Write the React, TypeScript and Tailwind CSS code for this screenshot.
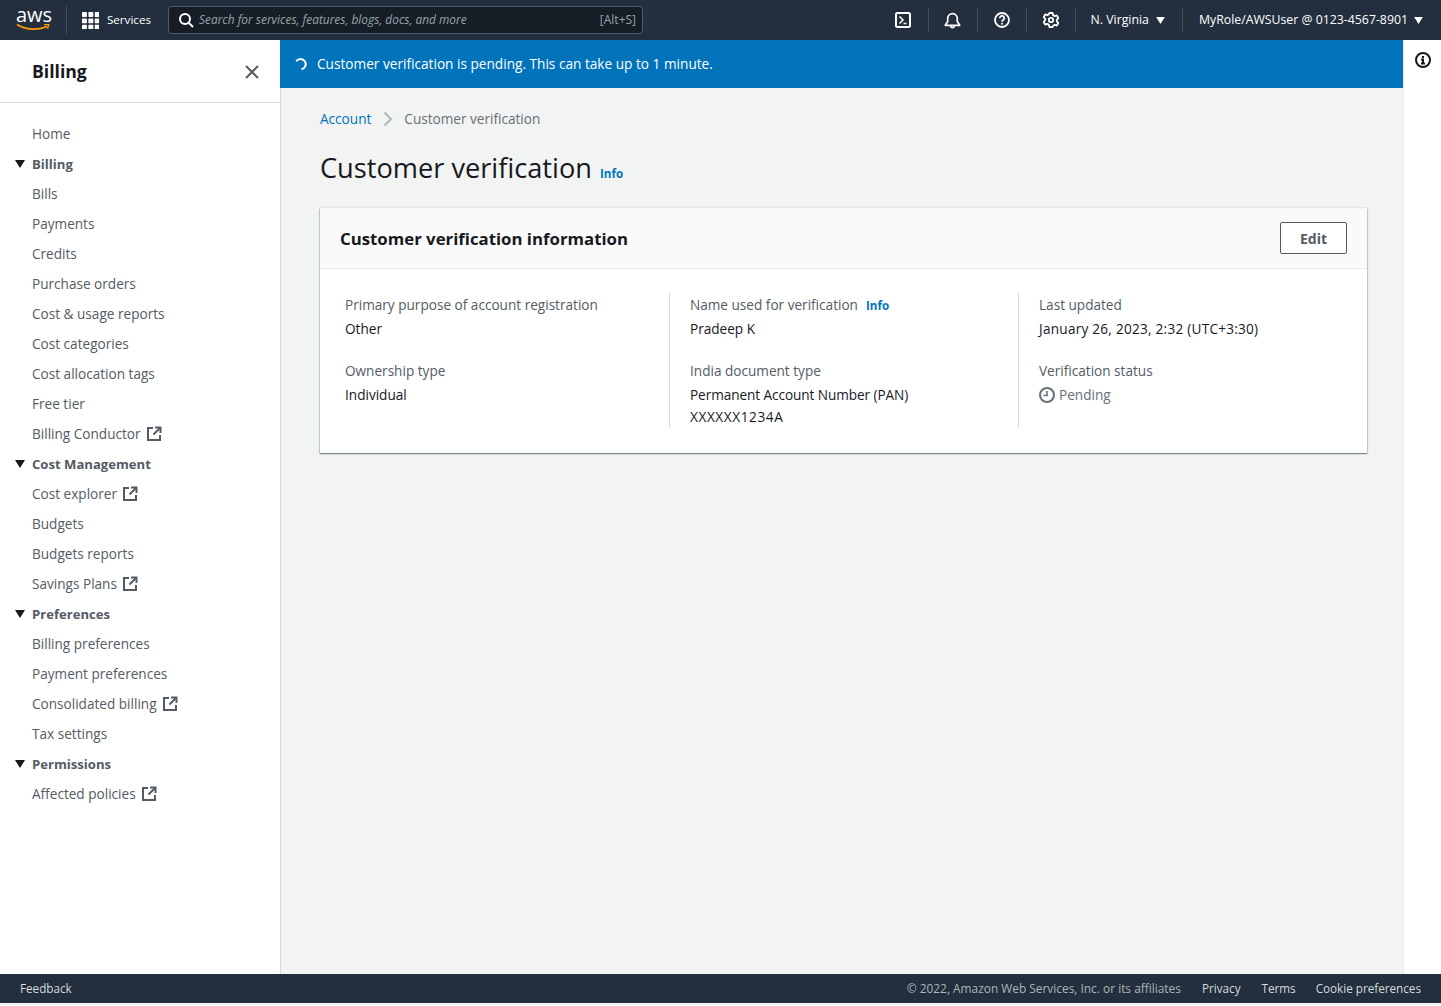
import type { ReactNode } from "react";

type NavItem = { label: string; section?: boolean; external?: boolean };

const NAV: NavItem[] = [
  { label: "Home" },
  { label: "Billing", section: true },
  { label: "Bills" },
  { label: "Payments" },
  { label: "Credits" },
  { label: "Purchase orders" },
  { label: "Cost & usage reports" },
  { label: "Cost categories" },
  { label: "Cost allocation tags" },
  { label: "Free tier" },
  { label: "Billing Conductor", external: true },
  { label: "Cost Management", section: true },
  { label: "Cost explorer", external: true },
  { label: "Budgets" },
  { label: "Budgets reports" },
  { label: "Savings Plans", external: true },
  { label: "Preferences", section: true },
  { label: "Billing preferences" },
  { label: "Payment preferences" },
  { label: "Consolidated billing", external: true },
  { label: "Tax settings" },
  { label: "Permissions", section: true },
  { label: "Affected policies", external: true },
];

function ExternalIcon() {
  return (
    <svg width="16" height="16" viewBox="0 0 16 16" fill="none" stroke="#545b64" strokeWidth="2" className="ml-[5px] shrink-0">
      <path d="M7 2H2v12h12V9" />
      <path d="M9 1.5h5.5V7" />
      <path d="M14 2L7.5 8.5" />
    </svg>
  );
}

function Caret({ className }: { className: string }) {
  return (
    <svg viewBox="0 0 10 8" className={className} fill="currentColor">
      <path d="M0 0h10L5 8z" />
    </svg>
  );
}

function Divider() {
  return <div className="h-6 w-px bg-[#414d5c]" />;
}

function TopBar() {
  return (
    <header className="h-10 shrink-0 bg-[#232f3e] flex items-center text-white text-[12.3px]">
      <div className="w-[66px] pl-4 flex flex-col items-start">
        <span className="text-[20px] leading-[15px] -mt-[3px]">aws</span>
        <svg width="34" height="8" viewBox="0 0 34 8" fill="none" className="mt-[1px]">
          <path d="M1 1.5C9 7 23 7.5 31 3.2" stroke="#ff9900" strokeWidth="1.8" />
          <path d="M28 1.6L32.8 1.6L31.4 5.8" stroke="#ff9900" strokeWidth="1.4" />
        </svg>
      </div>
      <div className="h-7 w-px bg-[#414d5c]" />
      <svg width="17" height="17" viewBox="0 0 16 16" fill="#fff" className="ml-[15px]">
        {[0, 6, 12].map((y) =>
          [0, 6, 12].map((x) => <rect key={`${x}-${y}`} x={x} y={y} width="4.6" height="4.6" rx="0.6" />)
        )}
      </svg>
      <span className="ml-2 w-[44px] text-[11.6px]">Services</span>
      <div className="ml-[17px] w-[475px] h-[28px] bg-[#161d26] border border-[#545b64] rounded-sm flex items-center pl-[9px] pr-[6px]">
        <svg width="16" height="16" viewBox="0 0 16 16" fill="none" stroke="#fff" strokeWidth="2">
          <circle cx="7" cy="7" r="5" />
          <path d="M10.5 10.5L15 15" />
        </svg>
        <span className="ml-[5px] italic text-[11.9px] text-[#95a5a6]">Search for services, features, blogs, docs, and more</span>
        <span className="ml-auto text-[#95a5a6] text-[12px]">[Alt+S]</span>
      </div>
      <div className="ml-auto flex items-center">
        <div className="w-[49px] flex justify-center">
          <svg width="16" height="16" viewBox="0 0 16 16" fill="none" stroke="#fff" strokeWidth="2">
            <rect x="1" y="1" width="14" height="14" rx="1.5" />
            <path d="M4.5 4.5L8 8l-3.5 3.5M8.5 11.5h3" strokeWidth="1.6" />
          </svg>
        </div>
        <Divider />
        <div className="w-[48px] flex justify-center">
          <svg width="17" height="17" viewBox="0 0 16 16" fill="none" stroke="#fff" strokeWidth="1.6">
            <path d="M1.2 12.5h13.6L12.5 9V6a4.5 4.5 0 00-9 0v3z" strokeLinejoin="round" />
            <path d="M6.3 13a1.7 1.7 0 003.4 0" strokeWidth="1.5" />
          </svg>
        </div>
        <Divider />
        <div className="w-[48px] flex justify-center">
          <svg width="16" height="16" viewBox="0 0 16 16" fill="none" stroke="#fff" strokeWidth="1.8">
            <circle cx="8" cy="8" r="7" />
            <path d="M5.8 6.2a2.2 2.2 0 114 1.1C9 8.2 8 8.5 8 9.8" />
            <path d="M8 11v1.6" />
          </svg>
        </div>
        <Divider />
        <div className="w-[48px] flex justify-center">
          <svg width="16" height="16" viewBox="0 0 16 16" fill="none" stroke="#fff" strokeWidth="1.8">
            <path d="M6.4 1h3.2l.5 2.2 1.6.9 2.1-.7 1.6 2.8-1.6 1.5v1.6l1.6 1.5-1.6 2.8-2.1-.7-1.6.9L9.6 15H6.4l-.5-2.2-1.6-.9-2.1.7L.6 9.8l1.6-1.5V6.7L.6 5.2l1.6-2.8 2.1.7 1.6-.9z" strokeLinejoin="round" />
            <circle cx="8" cy="8" r="2.2" />
          </svg>
        </div>
        <Divider />
        <span className="ml-[15px]">N. Virginia</span>
        <Caret className="ml-[7px] w-[9px] h-[7px] text-white" />
        <div className="ml-[17px]"><Divider /></div>
        <span className="ml-4">MyRole/AWSUser @ 0123-4567-8901</span>
        <Caret className="ml-[6px] mr-[18px] w-[9px] h-[7px] text-white" />
      </div>
    </header>
  );
}

function Sidebar() {
  return (
    <aside className="w-[280px] shrink-0 bg-white">
      <div className="h-[63px] flex items-center justify-between pl-8 pr-[21px] border-b border-[#d5dbdb]">
        <span className="text-[17.6px] font-bold text-[#16191f]">Billing</span>
        <svg width="14" height="14" viewBox="0 0 14 14" fill="none" stroke="#545b64" strokeWidth="2" className="mt-[1px]">
          <path d="M1 1l12 12M13 1L1 13" />
        </svg>
      </div>
      <nav className="pt-4">
        {NAV.map((item) => (
          <div key={item.label} className="relative h-[30px] pl-8 flex items-center text-[13.6px] text-[#545b64]">
            {item.section && <Caret className="absolute left-[15px] top-[11px] w-[10px] h-[8px] text-[#16191f]" />}
            <span className={item.section ? "font-bold text-[13.1px] pt-[2px]" : ""}>{item.label}</span>
            {item.external && <ExternalIcon />}
          </div>
        ))}
      </nav>
    </aside>
  );
}

function Field({ label, children, info }: { label: string; children: ReactNode; info?: boolean }) {
  return (
    <div>
      <div className="h-6 flex items-center text-[13.6px] text-[#545b64]">
        {label}
        {info && <span className="ml-2 mt-[2px] text-[11.6px] font-bold text-[#0073bb]">Info</span>}
      </div>
      <div className="text-[13.6px] leading-[22px] text-[#16191f] mt-[1px]">{children}</div>
    </div>
  );
}

function VerificationCard() {
  return (
    <section className="bg-white shadow-[0_1px_1px_0_rgba(0,28,36,0.3),1px_1px_1px_0_rgba(0,28,36,0.15),-1px_1px_1px_0_rgba(0,28,36,0.15),0_-1px_1px_0_rgba(0,28,36,0.06)]">
      <div className="h-[61px] bg-[#fafafa] border-b border-[#eaeded] flex items-center justify-between px-5">
        <h2 className="text-[16.8px] font-bold text-[#16191f] pt-[2px]">Customer verification information</h2>
        <button className="w-[67px] h-8 bg-white border border-[#545b64] rounded-[2px] text-[14px] font-bold text-[#545b64]">Edit</button>
      </div>
      <div className="grid grid-cols-[349px_349px_1fr] pt-6 pb-[25px]">
        <div className="pl-[25px] flex flex-col gap-[19px]">
          <Field label="Primary purpose of account registration">Other</Field>
          <Field label="Ownership type">Individual</Field>
        </div>
        <div className="pl-5 border-l border-[#d5dbdb] flex flex-col gap-[19px]">
          <Field label="Name used for verification" info>Pradeep K</Field>
          <Field label="India document type">
            <div className="tracking-[-0.07px]">Permanent Account Number (PAN)</div>
            <div className="tracking-[0.6px]">XXXXXX1234A</div>
          </Field>
        </div>
        <div className="pl-5 border-l border-[#d5dbdb] flex flex-col gap-[19px]">
          <Field label="Last updated">
            <span className="tracking-[0.25px]">January 26, 2023, 2:32 (UTC+3:30)</span>
          </Field>
          <Field label="Verification status">
            <span className="flex items-center text-[#687078]">
              <svg width="16" height="16" viewBox="0 0 16 16" fill="none" stroke="#687078" strokeWidth="2" className="mr-1">
                <circle cx="8" cy="8" r="7" />
                <path d="M8 4v4.5H4.5" strokeWidth="1.6" />
              </svg>
              Pending
            </span>
          </Field>
        </div>
      </div>
    </section>
  );
}

function Main() {
  return (
    <main className="flex-1 flex flex-col">
      <div className="h-12 shrink-0 bg-[#0073bb] flex items-center pl-[14px] text-white text-[13.65px]">
        <svg width="14" height="14" viewBox="0 0 14 14" fill="none" stroke="#fff" strokeWidth="2" className="mr-[9px]">
          <path d="M2.2 4.2A5.2 5.2 0 1 1 7.5 12.2" />
        </svg>
        <span>Customer verification is pending. This can take up to 1 minute.</span>
      </div>
      <div className="flex-1 bg-[#f2f3f3] border-l border-[#d5dbdb] pl-[39px] pr-[36px]">
        <div className="h-[62px] flex items-center text-[13.6px]">
          <span className="text-[#0073bb]">Account</span>
          <svg width="10" height="16" viewBox="0 0 10 16" fill="none" stroke="#aab7b8" strokeWidth="1.8" className="ml-3 mr-[11px]">
            <path d="M1.5 1.5L8 8l-6.5 6.5" />
          </svg>
          <span className="text-[#687078]">Customer verification</span>
        </div>
        <div className="h-[58px] flex items-start">
          <h1 className="text-[27.2px] text-[#16191f] leading-9">Customer verification</h1>
          <span className="ml-2 mt-[15px] text-[11.6px] font-bold text-[#0073bb]">Info</span>
        </div>
        <VerificationCard />
      </div>
    </main>
  );
}

function Footer() {
  return (
    <footer className="h-[29px] shrink-0 bg-[#232f3e] flex items-center justify-between pl-5 pr-5 text-[11.7px] text-[#d5dbdb]">
      <span>Feedback</span>
      <div className="flex items-center gap-[21px]">
        <span className="text-[#aab7b8] text-[11.9px]">© 2022, Amazon Web Services, Inc. or its affiliates</span>
        <span>Privacy</span>
        <span>Terms</span>
        <span className="-ml-px">Cookie preferences</span>
      </div>
    </footer>
  );
}

export default function App() {
  return (
    <div className="h-[1006px] flex flex-col bg-white overflow-hidden font-['Open_Sans',sans-serif]">
      <TopBar />
      <div className="flex-1 flex min-h-0">
        <Sidebar />
        <Main />
        <aside className="w-[38px] shrink-0 bg-white border-l border-[#eaeded] flex justify-center pt-3">
          <svg width="16" height="16" viewBox="0 0 16 16" fill="none" stroke="#16191f" strokeWidth="2" className="ml-[1px]">
            <circle cx="8" cy="8" r="7" />
            <path d="M6 7.5h2v4M6 11.5h4M8 4v2" />
          </svg>
        </aside>
      </div>
      <Footer />
      <div className="h-[3px] shrink-0 bg-[#f2f3f3]" />
    </div>
  );
}
